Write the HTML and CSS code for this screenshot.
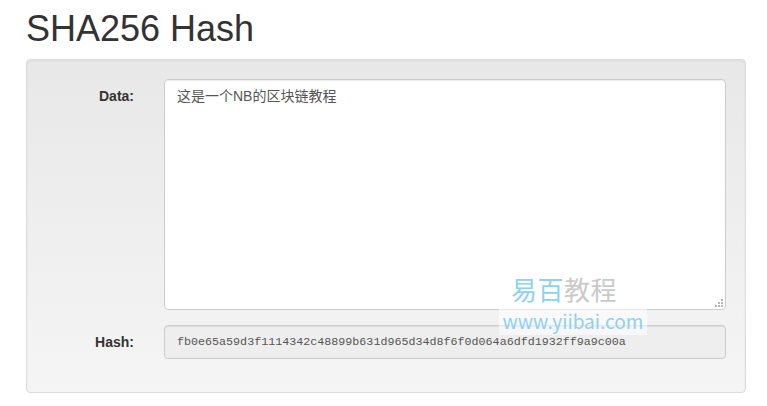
FILE: index.html
```html
<!DOCTYPE html>
<html lang="zh">
<head>
    <meta charset="UTF-8" />
    <meta name="viewport" content="width=device-width, initial-scale=1.0"/>
    <title>SHA256 Hash</title>
    <link rel="stylesheet" href="styles.css">
</head>
<body>
<div class="page">
    <h1 class="title">SHA256 Hash</h1>
    <div class="well">
        <form class="form">
            <div class="group">
                <label class="label" for="data">Data:</label>
                <div class="area-wrap">
                    <textarea id="data" class="control area">这是一个NB的区块链教程</textarea>
                    <svg class="grip" width="8" height="8" viewBox="0 0 8 8">
                        <rect x="6" y="0" width="2" height="2"/>
                        <rect x="3" y="3" width="2" height="2"/>
                        <rect x="6" y="3" width="2" height="2"/>
                        <rect x="0" y="6" width="2" height="2"/>
                        <rect x="3" y="6" width="2" height="2"/>
                        <rect x="6" y="6" width="2" height="2"/>
                    </svg>
                </div>
            </div>
            <div class="group">
                <label class="label" for="hash">Hash:</label>
                <input id="hash" class="control hash" readonly value="fb0e65a59d3f1114342c48899b631d965d34d8f6f0d064a6dfd1932ff9a9c00a">
            </div>
        </form>
        <div class="mark">
            <div class="mark-name"><span class="blue">易百</span>教程</div>
            <div class="mark-url">www.yiibai.com</div>
        </div>
    </div>
</div>
</body>
</html>
```

FILE: styles.css
```css
* {
    margin: 0;
    padding: 0;
    box-sizing: border-box;
}
html, body {
    background: #fff;
    color: #333;
    font-family: "Liberation Sans", Arial, sans-serif;
    font-size: 14px;
    line-height: 20px;
}
.page {
    padding: 9px 21px 0 26px;
}
.title {
    font-size: 36px;
    font-weight: normal;
    line-height: 39.6px;
    margin-bottom: 10px;
    color: #333;
}
.well {
    position: relative;
    padding: 19px 19px 18px;
    border: 1px solid #dcdcdc;
    border-radius: 4px;
    background: linear-gradient(to bottom, #e8e8e8 0%, #f5f5f5 100%);
    box-shadow: inset 0 1px 3px rgba(0, 0, 0, 0.05);
}
.group {
    display: grid;
    grid-template-columns: 88px 1fr;
    column-gap: 30px;
    margin-bottom: 15px;
}
.label {
    padding-top: 7px;
    text-align: right;
    font-weight: bold;
}
.control {
    display: block;
    width: 100%;
    padding: 6px 12px;
    border: 1px solid #ccc;
    border-radius: 4px;
    color: #555;
    background: #fff;
    box-shadow: inset 0 1px 1px rgba(0, 0, 0, 0.075);
    font-family: "Liberation Sans", "Noto Sans CJK SC", sans-serif;
    font-size: 14px;
    line-height: 20px;
}
.area-wrap {
    position: relative;
}
.area {
    height: 231px;
    resize: none;
}
/* dotted resize grip */
.grip {
    position: absolute;
    right: 3px;
    bottom: 3px;
    fill: #b4b4b4;
}
.hash {
    height: 34px;
    background: #eee;
    font-family: "Liberation Mono", monospace;
    font-size: 11.7px;
}
.mark {
    position: absolute;
    left: 472px;
    top: 214px;
    font-family: "Noto Sans CJK SC", sans-serif;
    pointer-events: none;
}
.mark-name {
    margin-left: 12px;
    font-size: 26px;
    line-height: 30px;
    color: #cacaca;
    letter-spacing: 0.5px;
}
.mark-name .blue {
    color: #8dd2f2;
}
.mark-url {
    margin-top: 2px;
    padding: 2px 3px;
    width: 148px;
    text-align: center;
    background: rgba(255, 255, 255, 0.55);
    color: #8dd2f2;
    font-size: 19px;
    line-height: 25px;
}
```
